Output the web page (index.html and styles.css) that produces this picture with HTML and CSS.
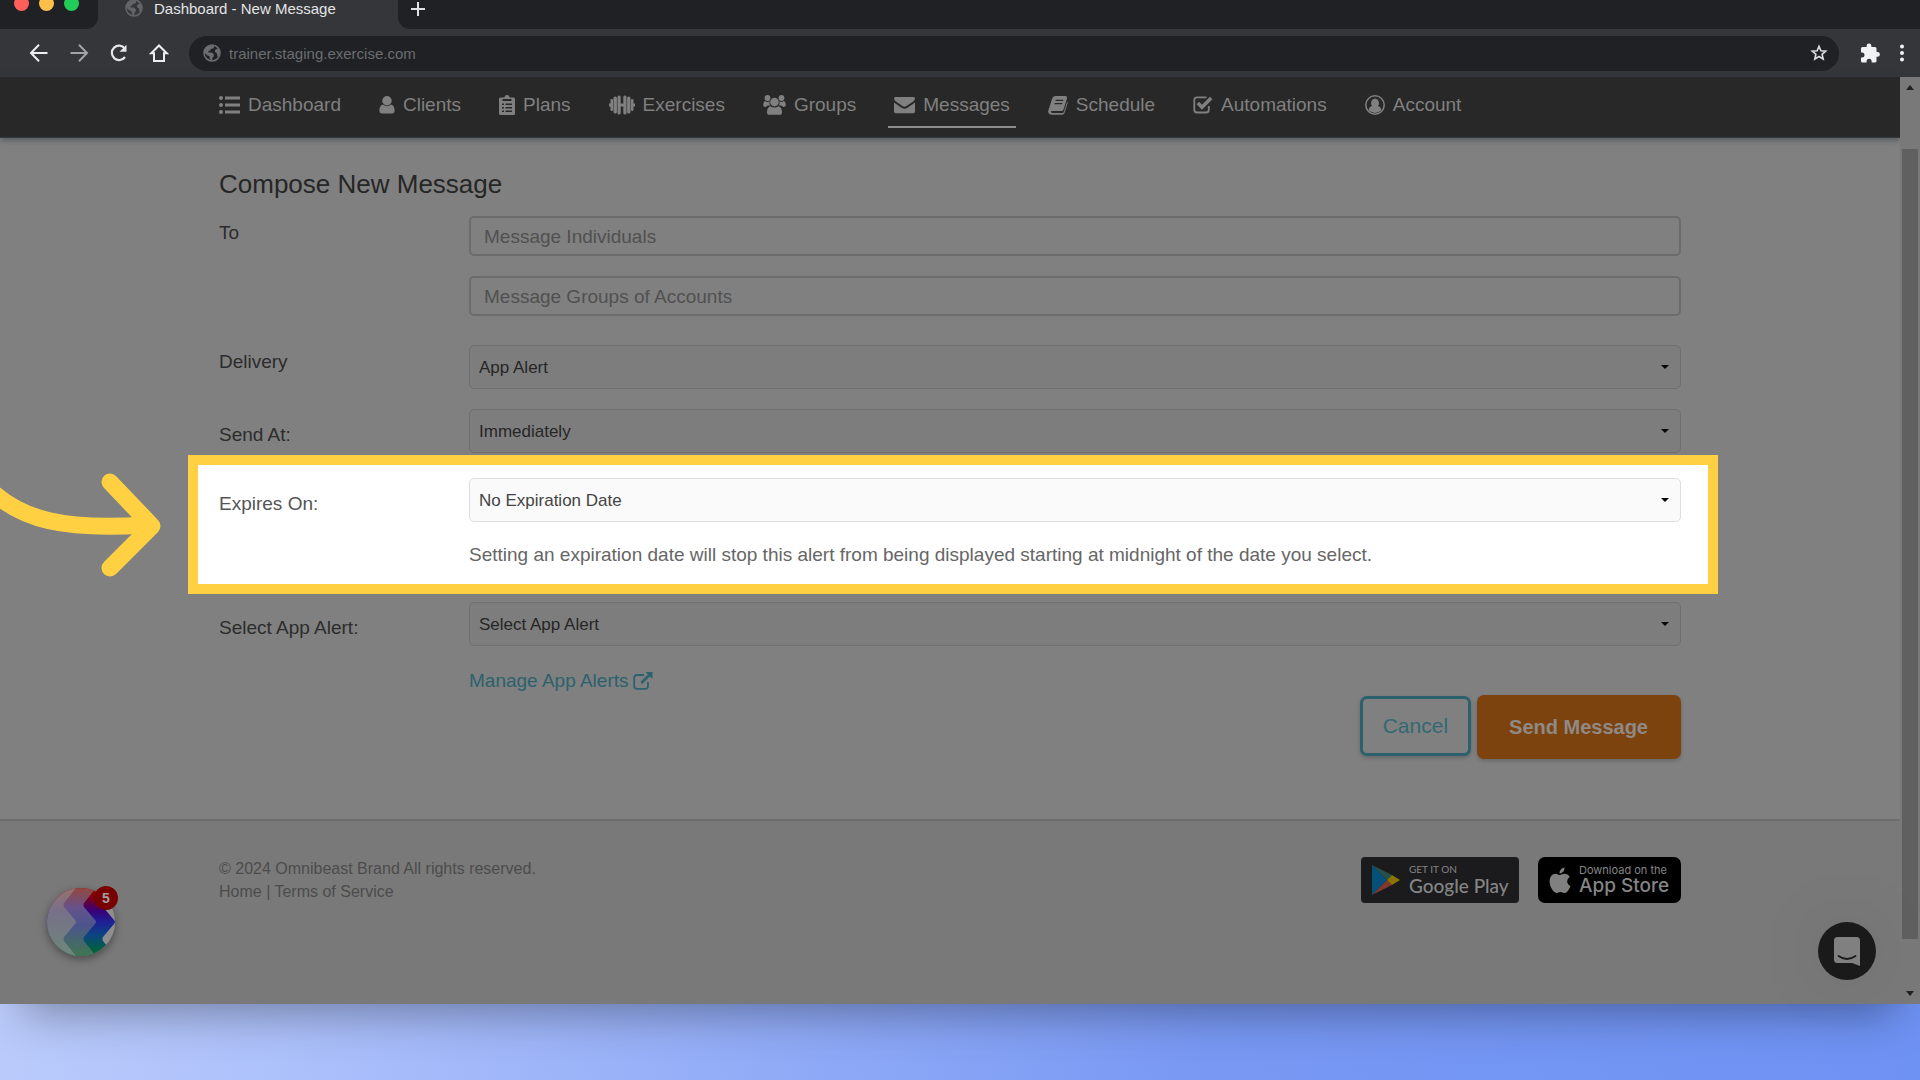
FILE: index.html
```html
<!DOCTYPE html>
<html lang="en">
<head>
<meta charset="utf-8">
<meta name="viewport" content="width=device-width, initial-scale=1">
<title>Dashboard - New Message</title>
<link rel="stylesheet" href="styles.css">
</head>
<body>
<svg class="sprite" aria-hidden="true">
  <symbol id="globe" viewBox="0 0 18 18"><circle cx="9" cy="9" r="8" fill="none" stroke="currentColor" stroke-width="1.6"/><path fill="currentColor" d="M8 1.2C4 1.5 1.3 4.6 1.2 8.4l3.6 3.4 1.7.2v2.2l1.6 2.4 1.2.2V14l1.5-1.7V10L8.700 8.600H5.500V7l2-.4V5l2.800-.6L11.500 1.800z"/><path fill="currentColor" d="M14.500 4.500 12 6v2l2 1.500.5 3.500 1.500-1 .8-3-.8-3z"/></symbol>
</svg>
<div class="window">
  <div class="tabs">
    <div class="lights"><span class="dot red"></span><span class="dot amber"></span><span class="dot green"></span></div>
    <div class="tab"><svg class="tab-globe" width="18" height="18"><use href="#globe"/></svg><span>Dashboard - New Message</span></div>
    <div class="tab-rest"><button class="icon-btn" aria-label="New tab"><svg width="16" height="16" viewBox="0 0 16 16"><path d="M8 1v14M1 8h14" stroke="#e0e1e4" stroke-width="2"/></svg></button></div>
  </div>
  <div class="toolbar">
    <div class="tools">
      <button class="icon-btn" aria-label="Back"><svg width="20" height="20" viewBox="0 0 20 20"><path d="M18.500 10H2.500M10 1.700 2 10l8 8.300" fill="none" stroke="#eee" stroke-width="2"/></svg></button>
      <button class="icon-btn" aria-label="Forward"><svg width="20" height="20" viewBox="0 0 20 20"><path d="M1.500 10h16M10 1.700l8 8.300-8 8.300" fill="none" stroke="#a2a3a6" stroke-width="2"/></svg></button>
      <button class="icon-btn" aria-label="Reload"><svg width="20" height="20" viewBox="0 0 20 20"><path d="M15.800 5.500A7.200 7.200 0 1 0 16 14" fill="none" stroke="#e6e6e8" stroke-width="2.200"/><path d="M17.500 1.800v7h-7z" fill="#e6e6e8"/></svg></button>
      <button class="icon-btn" aria-label="Home"><svg width="20" height="20" viewBox="0 0 20 20"><path d="M10 2.500 2.300 10.200H5V18h10v-7.800h2.700z" fill="none" stroke="#eee" stroke-width="2"/></svg></button>
    </div>
    <div class="address">
      <svg width="18" height="18" class="address-globe"><use href="#globe"/></svg>
      <input type="text" aria-label="Address" value="trainer.staging.exercise.com">
      <button class="icon-btn" aria-label="Bookmark"><svg width="18" height="18" viewBox="0 0 18 18"><path d="m9 2.300 1.900 4.400 4.800.4-3.600 3.200 1.100 4.700L9 12.500 4.800 15l1.100-4.700L2.300 7.100l4.800-.4z" fill="none" stroke="#dcdde0" stroke-width="1.600"/></svg></button>
    </div>
    <div class="end-tools">
      <button class="icon-btn" aria-label="Extensions"><svg width="20" height="20" viewBox="0 0 20 20"><path d="M1 5.500Q1 4 2.500 4H6.600V3a2.400 2.400 0 0 1 4.800 0v1h3.600q1.500 0 1.500 1.500V9h1a2.400 2.400 0 0 1 0 4.800h-1v4.200q0 1.500-1.500 1.500h-3.400v-1.200a2.500 2.500 0 0 0-5 0v1.200H2.500Q1 19.500 1 18v-3.500h1a2.500 2.500 0 0 0 0-5H1z" fill="#f1f2f4"/></svg></button>
      <button class="icon-btn" aria-label="Menu"><svg width="6" height="18" viewBox="0 0 6 18" fill="#f1f2f4"><circle cx="3" cy="2.500" r="2"/><circle cx="3" cy="9" r="2"/><circle cx="3" cy="15.500" r="2"/></svg></button>
    </div>
  </div>
  <div class="viewport">
    <div class="page">
      <header class="navbar">
        <nav class="container nav">
          <a href="#"><svg width="21" height="20" viewBox="0 0 21 20"><g fill="currentColor"><circle cx="2" cy="3" r="2"/><circle cx="2" cy="10" r="2"/><circle cx="2" cy="17" r="2"/><path d="M6 1.500h15v3H6zM6 8.500h15v3H6zM6 15.500h15v3H6z"/></g></svg>Dashboard</a>
          <a href="#"><svg width="16" height="20" viewBox="0 0 16 20"><path fill="currentColor" d="M8 1a4.500 4.500 0 0 1 0 9.500A4.500 4.500 0 0 1 8 1zM4 9.500q4 3.500 8 0 3.600.7 3.600 6.300Q15.600 18.500 13 18.500H3Q.4 18.500.4 15.800.4 10.200 4 9.500z"/></svg>Clients</a>
          <a href="#"><svg width="16" height="20" viewBox="0 0 16 20"><path fill="currentColor" fill-rule="evenodd" d="M1.500 2.500h4a2.500 2.500 0 0 1 5 0h4Q16 2.500 16 4v14.500Q16 20 14.500 20h-13Q0 20 0 18.500V4q0-1.500 1.500-1.500zM3.500 4v2h9V4zM3 8.500V10h2V8.500zm3.500 0V10H13V8.500zM3 12v1.500h2V12zm3.500 0v1.500H13V12zM3 15.500V17h2v-1.500zm3.500 0V17H13v-1.500z"/></svg>Plans</a>
          <a href="#"><svg width="26" height="20" viewBox="0 0 26 20"><path fill="currentColor" d="M0 8.500h1.500V5q0-1 1.200-1T4 5v10q0 1-1.300 1t-1.200-1v-3.500H0zM4.500 3q0-1.500 1.700-1.500T7.900 3v14q0 1.500-1.700 1.500T4.500 17zM8.500 2q0-1.500 1.600-1.500T11.700 2v6.500h2.600V2q0-1.500 1.600-1.500T17.500 2v16q0 1.500-1.600 1.500T14.300 18v-6.500h-2.600V18q0 1.500-1.600 1.500T8.500 18zM18.100 3q0-1.500 1.700-1.500T21.500 3v14q0 1.500-1.700 1.500T18.100 17zM22 5q0-1 1.300-1t1.200 1v3.500H26v3h-1.500V15q0 1-1.200 1T22 15z"/></svg>Exercises</a>
          <a href="#"><svg width="23" height="20" viewBox="0 0 23 20"><g fill="currentColor"><circle cx="4.500" cy="3" r="2.900"/><circle cx="18.500" cy="3" r="2.900"/><circle cx="11.500" cy="7" r="4.300"/><path d="M2 6q3 2 4.500 0-.5 3 1 4.500H4.500L3 12Q0 12 .2 9.500.4 6.500 2 6zM21 6q-3 2-4.500 0 .5 3-1 4.500h3L20 12q3 0 2.800-2.500Q22.600 6.500 21 6zM7.500 11.200q4 2.600 8 0Q19 12 19 17.200q0 2.600-2.500 2.600h-10Q4 19.800 4 17.200 4 12 7.500 11.200z"/></g></svg>Groups</a>
          <a href="#" class="active" aria-current="page"><svg width="21" height="20" viewBox="0 0 21 20"><path fill="currentColor" d="M1.500 2h18Q21 2 21 3.600 21 5 19.500 6.200l-7 4.900q-2 1.400-4 0l-7-4.900Q0 5 0 3.600 0 2 1.500 2zM0 7.500l7.500 5.200q3 2 6 0L21 7.500v9q0 1.700-1.700 1.700H1.700Q0 18.200 0 16.500z"/></svg>Messages</a>
          <a href="#"><svg width="20" height="20" viewBox="0 0 20 20"><path fill="currentColor" fill-rule="evenodd" d="M7 1h10.500q2 .3 1.500 2.500l-3.500 11Q15 16 13.500 16H4q-1.500 0-1 1t1.500 1h10q1 0 1.400-1.200L19.200 6.500Q20 7 19.500 8.500l-3 9.500q-.6 1.800-2.500 1.800H3.500Q1 19.800.3 17.500q-.4-1.200.2-2.500L4.200 3.500Q5 1 7 1zm.8 3.700L7.400 6H15l.4-1.300zM6.800 8l-.4 1.300H14l.4-1.300z"/></svg>Schedule</a>
          <a href="#"><svg width="20" height="20" viewBox="0 0 20 20"><path fill="none" stroke="currentColor" stroke-width="1.800" d="M15.800 11v3.800q0 2.700-2.700 2.700H4Q1.300 17.500 1.300 14.800V5Q1.300 2.300 4 2.300h9.500"/><path fill="none" stroke="currentColor" stroke-width="3.400" d="m4.800 8 4.200 4.300L18.200 3"/></svg>Automations</a>
          <a href="#"><svg width="20" height="20" viewBox="0 0 20 20"><circle cx="10" cy="10" r="9.200" fill="none" stroke="currentColor" stroke-width="1.500"/><path fill="currentColor" d="M10 3.500a4.300 4.600 0 0 1 3 7.500q3 .8 3.300 4.300Q13.600 18 10 18t-6.300-2.700Q4 11.800 7 11a4.300 4.600 0 0 1 3-7.500z"/></svg>Account</a>
        </nav>
      </header>
      <main class="container main">
        <h1>Compose New Message</h1>
        <form>
          <div class="row row-to">
            <label for="to">To</label>
            <div class="stack">
              <input id="to" type="text" placeholder="Message Individuals">
              <input type="text" placeholder="Message Groups of Accounts" aria-label="Message Groups of Accounts">
            </div>
          </div>
          <div class="row row-gap">
            <label for="delivery">Delivery</label>
            <div class="select"><select id="delivery"><option>App Alert</option></select></div>
          </div>
          <div class="row low">
            <label for="send-at">Send At:</label>
            <div class="select"><select id="send-at"><option>Immediately</option></select></div>
          </div>
          <div class="spotlight">
            <div class="row low">
              <label for="expires">Expires On:</label>
              <div class="stack">
                <div class="select"><select id="expires"><option>No Expiration Date</option></select></div>
                <p>Setting an expiration date will stop this alert from being displayed starting at midnight of the date you select.</p>
              </div>
            </div>
          </div>
          <div class="row low">
            <label for="alert">Select App Alert:</label>
            <div class="stack">
              <div class="select"><select id="alert"><option>Select App Alert</option></select></div>
              <a class="manage" href="#">Manage App Alerts<svg width="20" height="20" viewBox="0 0 20 20"><path d="M11 4H4Q1.200 4 1.200 6.800V15q0 2.800 2.800 2.800h8.200q2.800 0 2.800-2.800v-4" fill="none" stroke="currentColor" stroke-width="1.800"/><path d="M12.500 1H19.500v7l-2.600-2.500-7.600 7.600-2-2L15 3.500z" fill="currentColor"/></svg></a>
            </div>
          </div>
          <div class="actions">
            <button type="button" class="cancel">Cancel</button>
            <button type="submit" class="send">Send Message</button>
          </div>
        </form>
      </main>
      <footer>
        <div class="container foot">
          <div class="legal">© 2024 Omnibeast Brand All rights reserved.<br><a href="#">Home</a> | <a href="#">Terms of Service</a></div>
          <div class="stores">
            <a href="#" class="store google">
              <svg width="28" height="32" viewBox="0 0 28 32"><path d="M0 1v30l15-15z" fill="#045078"/><path d="M0 1l15 15 5-5z" fill="#27504b"/><path d="M0 31l15-15 5 5z" fill="#81382f"/><path d="M20 11l8 5-8 5-5-5z" fill="#8b7500"/></svg>
              <span><small>GET IT ON</small><b>Google Play</b></span>
            </a>
            <a href="#" class="store apple">
              <svg width="22" height="27" viewBox="0 0 22 27"><path fill="#808080" d="M15.500.5q.3 2.300-1.300 4.200t-3.700 1.800q-.2-2.200 1.300-4T15.500.5zM20.800 9.700q-2.600 1.700-2.600 4.500 0 3.300 3.300 4.800-.8 2.500-2.500 4.700-1.600 2.300-3.300 2.300-1 0-2.100-.6-1.200-.5-2.200-.5-1.100 0-2.200.5-1 .5-1.900.6-1.800 0-3.700-2.700Q.5 19 .5 14.500q0-3.600 1.800-5.700 1.700-2 4.200-2 1.200 0 2.500.6 1.300.5 1.900.5.600 0 2-.6 1.500-.6 2.800-.6 3.200.1 5.100 3z"/></svg>
              <span><small>Download on the</small><b>App Store</b></span>
            </a>
          </div>
        </div>
      </footer>
    </div>
    <div class="scrollbar" aria-hidden="true"><span class="up"></span><span class="thumb"></span><span class="down"></span></div>
  </div>

  <svg class="arrow" width="170" height="120" viewBox="0 0 170 120" fill="none" stroke="#ffd142" stroke-width="17" stroke-linecap="round" stroke-linejoin="round" aria-hidden="true"><path d="M-12 28C22 61 65 70 145 65M110 22l42 44-42 42"/></svg>
  <button class="widget" aria-label="Updates, 5 new">
    <svg width="68" height="68" viewBox="0 0 68 68">
      <defs>
        <linearGradient id="strong" x2="0" y2="1"><stop offset=".1" stop-color="#8b0000"/><stop offset=".33" stop-color="#380078"/><stop offset=".5" stop-color="#1f2096"/><stop offset=".7" stop-color="#0c4580"/><stop offset=".9" stop-color="#006040"/></linearGradient>
        <linearGradient id="mid" x2="0" y2="1"><stop offset="0" stop-color="#93473f"/><stop offset=".3" stop-color="#65528d"/><stop offset=".55" stop-color="#4b558b"/><stop offset="1" stop-color="#417651"/></linearGradient>
        <linearGradient id="soft" x2="0" y2="1"><stop offset="0" stop-color="#96716d"/><stop offset=".35" stop-color="#777089"/><stop offset="1" stop-color="#6e877a"/></linearGradient>
        <clipPath id="disc"><circle cx="34" cy="34" r="34"/></clipPath>
      </defs>
      <g clip-path="url(#disc)">
        <path fill="#8e8e8e" d="M0 0h68v68H0z"/>
        <path fill="url(#strong)" d="M0 0h68L56 15q-1 2 0 4l11 13q2 2 0 4L56 49q-1 2 0 4l12 15H0z"/>
        <path fill="url(#mid)" d="M0 0h49L37 15q-1 2 0 4l11 13q2 2 0 4L37 49q-1 2 0 4l12 15H0z"/>
        <path fill="url(#soft)" d="M0 0h29L17 15q-1 2 0 4l11 13q2 2 0 4L17 49q-1 2 0 4l12 15H0z"/>
      </g>
    </svg>
    <span class="count">5</span>
  </button>
  <button class="chat" aria-label="Open chat"><svg width="26" height="29" viewBox="0 0 26 29"><path d="M3.500 0h19Q26 0 26 3.500V29l-8-3H3.500Q0 26 0 22.500v-19Q0 0 3.500 0z" fill="#808080"/><path d="M4.500 19q8.500 6 17 0" fill="none" stroke="#1a1a1a" stroke-width="1.800" stroke-linecap="round"/></svg></button>
</div>
</body>
</html>
```

FILE: styles.css
```css
* { box-sizing: border-box; }

body {
  margin: 0;
  min-height: 100vh;
  display: flex;
  flex-direction: column;
  overflow-x: hidden;
  font-family: "Liberation Sans", Arial, sans-serif;
  font-size: 19px;
  color: #2c2c2c;
  background: linear-gradient(100deg, #c3d1fb 0%, #adc1fb 22%, #7898f3 66%, #6e92f4 100%);
}

.sprite { position: absolute; width: 0; height: 0; }
svg { display: block; flex: none; }
button, input, select { font: inherit; margin: 0; }
a { color: inherit; text-decoration: none; }
h1, p { margin: 0; font-weight: normal; }

.window {
  position: relative;
  flex: 1;
  display: flex;
  flex-direction: column;
  margin-bottom: 76px;
  box-shadow: 0 32px 44px -24px rgba(0, 0, 0, .36);
}

.icon-btn { display: flex; padding: 0; border: 0; background: none; }

/* Browser chrome */
.tabs { display: flex; height: 29px; background: #35363a; color: #e3e4e6; font-size: 15px; }
.lights {
  display: flex;
  gap: 10px;
  width: 98px;
  padding-left: 14px;
  background: #202124;
  border-radius: 0 0 12px 0;
}
.dot { width: 15px; height: 15px; margin-top: -4px; border-radius: 50%; }
.red { background: #ff5f5a; }
.amber { background: #ffbd4a; }
.green { background: #22cc58; }
.tab { display: flex; align-items: center; gap: 11px; width: 300px; height: 16px; padding-left: 27px; white-space: nowrap; }
.tab-globe { color: #626468; }
.tab-rest { flex: 1; padding: 1px 0 0 12px; background: #202124; border-radius: 0 0 0 12px; }

.toolbar { display: flex; align-items: center; height: 48px; padding: 0 15px 0 29px; background: #35363a; }
.tools { display: flex; gap: 20px; margin-right: 20px; }
.address {
  flex: 1;
  display: flex;
  align-items: center;
  gap: 8px;
  height: 35px;
  padding: 0 11px 0 14px;
  border-radius: 18px;
  background: #202124;
  color: #6b6d71;
  font-size: 15px;
}
.address input { flex: 1; min-width: 0; padding: 0; border: 0; background: none; color: inherit; }
.end-tools { display: flex; align-items: center; gap: 19px; margin-left: 21px; }

/* Page */
.viewport { flex: 1; display: flex; }
.page { flex: 1; min-width: 0; display: flex; flex-direction: column; background: #808080; }
.container { width: calc(100% - 80px); max-width: 1462px; margin: 0 auto; }

.navbar { background: #282828; border-bottom: 1px solid #343b40; box-shadow: 0 2px 6px rgba(50, 60, 68, .6); }
.nav { display: flex; gap: 26px; height: 60px; padding-top: 5px; color: #808080; }
.nav a {
  display: flex;
  align-items: center;
  gap: 8px;
  height: 46px;
  padding: 2px 6px 0;
  border-bottom: 2px solid transparent;
}
.nav a:first-child { padding-left: 0; }
.nav .active { border-bottom-color: #8c8c8c; }

.main { padding: 30px 0 60px; }
h1 { margin-bottom: 16px; font-size: 26px; line-height: 32px; color: #262626; }

.row { display: grid; grid-template-columns: 250px minmax(0, 1fr); align-items: start; }
.row label { padding-top: 1px; line-height: 32px; }
.row.low label { padding-top: 10px; }
.stack { display: flex; flex-direction: column; gap: 20px; }
.row-to { margin-bottom: 29px; }
.row-gap { margin-bottom: 20px; }

.stack input {
  width: 100%;
  height: 40px;
  padding: 2px 13px 0;
  border: 2px solid #6c6c6c;
  border-radius: 5px;
  background: #808080;
  color: #2c2c2c;
}
.stack input::placeholder { color: #505050; opacity: 1; }

.select { position: relative; }
.select::after {
  content: "";
  position: absolute;
  top: 20px;
  right: 12px;
  border: 4px solid transparent;
  border-top-color: #080808;
  border-bottom: 0;
  pointer-events: none;
}
select {
  appearance: none;
  display: block;
  width: 100%;
  height: 44px;
  padding: 1px 28px 0 9px;
  border: 1px solid #6f6f6f;
  border-radius: 5px;
  background: #7d7d7d;
  color: #262626;
  font-size: 17px;
}

.spotlight {
  margin: 2px -37px 8px -31px;
  padding: 13px 27px 17px 21px;
  border: 10px solid #ffd142;
  background: #fff;
  color: #555;
}
.spotlight select { background: #fafafa; border-color: #dedede; color: #444; }
.spotlight p { padding-top: 1px; line-height: 24px; color: #666; }

.manage { display: flex; align-items: center; gap: 4px; width: max-content; padding-top: 3px; line-height: 24px; color: #2b626d; }

.actions { display: flex; justify-content: flex-end; gap: 6px; margin-top: 2px; }
.actions button { border-radius: 7px; box-shadow: 0 2px 4px rgba(0, 0, 0, .2); }
.cancel { height: 60px; padding: 0 20px; border: 3px solid #2b616d; background: #808080; color: #336973; font-size: 21px; }
.actions .cancel { margin-top: 1px; }
.send { height: 64px; padding: 0 33px 0 32px; border: 0; background: #7d430f; color: #8f8a85; font-size: 20px; font-weight: bold; }

footer { flex: 1; border-top: 2px solid #6e6e6e; background: #797979; }
.foot { display: flex; justify-content: space-between; padding-top: 36px; }
.legal { font-size: 16px; line-height: 23px; color: #4c4c4c; }
.stores { display: flex; gap: 19px; }
.store { display: flex; align-items: center; height: 46px; color: #858585; }
.store span { display: flex; flex-direction: column; white-space: nowrap; }
.store b { font-weight: 500; }
.google { gap: 9px; width: 158px; padding-left: 11px; border-radius: 4px; background: #1b1b1d; font-family: Lato, sans-serif; }
.google small { font-size: 10px; line-height: 12px; }
.google b { font-size: 19px; line-height: 22px; }
.apple { gap: 8px; width: 143px; padding-left: 11px; border-radius: 7px; background: #000; font-family: Inter, sans-serif; }
.apple small { font-size: 11px; line-height: 12px; }
.apple b { font-size: 19px; line-height: 20px; }

.scrollbar { display: flex; flex-direction: column; align-items: center; width: 20px; padding: 8px 2px; background: #797979; }
.up, .down { border: 4px solid transparent; }
.up { border-top: 0; border-bottom: 5px solid #222; }
.down { border-bottom: 0; border-top: 5px solid #222; }
.thumb { flex: 1; width: 16px; margin: 59px 0 52px; background: #606060; }

/* Floating elements */
.arrow { position: absolute; left: 0; top: 460px; }
.widget {
  position: absolute;
  left: 47px;
  bottom: 48px;
  padding: 0;
  border: 0;
  border-radius: 50%;
  background: none;
  box-shadow: 0 3px 8px rgba(0, 0, 0, .4);
}
.count {
  position: absolute;
  top: -2px;
  right: -3px;
  width: 24px;
  height: 24px;
  border-radius: 50%;
  background: #780000;
  color: #a0a0a0;
  font-size: 14px;
  font-weight: bold;
  line-height: 24px;
}
.chat {
  position: absolute;
  right: 44px;
  bottom: 24px;
  display: flex;
  align-items: center;
  justify-content: center;
  width: 58px;
  height: 58px;
  padding: 0;
  border: 0;
  border-radius: 50%;
  background: #1a1a1a;
  box-shadow: 0 0 70px rgba(0, 0, 0, .1);
}
```
